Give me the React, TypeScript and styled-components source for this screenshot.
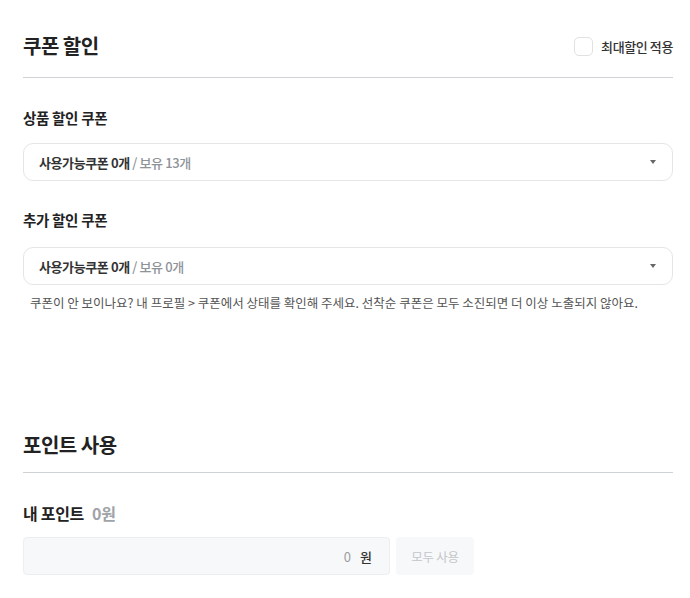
import React from "react";
import styled, { createGlobalStyle } from "styled-components";

const GlobalStyle = createGlobalStyle`
  html, body { margin: 0; padding: 0; background: #fff; }
  body {
    font-family: "Noto Sans CJK KR", "Noto Sans", sans-serif;
    color: #222;
    -webkit-font-smoothing: antialiased;
  }
`;

const Page = styled.div`
  width: 650px;
  padding: 0 17px 0 23px;
`;

const Section = styled.section<{ $top: number }>`
  padding-top: ${(p) => p.$top}px;
`;

const SectionHeader = styled.div<{ $gap: number }>`
  display: flex;
  align-items: center;
  justify-content: space-between;
  padding-bottom: ${(p) => p.$gap}px;
  border-bottom: 1px solid #cfd2d4;
`;

const Title = styled.h2`
  margin: 0;
  font-size: 20px;
  line-height: 32px;
  font-weight: 700;
  color: #222;
  letter-spacing: -0.5px;
`;

const CheckLabel = styled.label`
  display: flex;
  align-items: center;
  gap: 8px;
  font-size: 13px;
  font-weight: 500;
  color: #333;
  letter-spacing: -0.4px;
  cursor: pointer;
`;

const CheckBox = styled.span`
  width: 17px;
  height: 17px;
  border: 1px solid #dfe1e3;
  border-radius: 5px;
  background: #fff;
`;

const Label = styled.h3<{ $top: number }>`
  margin: ${(p) => p.$top}px 0 0;
  font-size: 14.5px;
  line-height: 20px;
  font-weight: 700;
  color: #222;
  letter-spacing: -0.3px;
`;

const Select = styled.div<{ $top: number }>`
  margin-top: ${(p) => p.$top}px;
  height: 36px;
  border: 1px solid #e3e5e7;
  border-radius: 10px;
  display: flex;
  align-items: center;
  justify-content: space-between;
  padding: 0 16px 0 15px;
`;

const SelectText = styled.span`
  font-size: 13px;
  font-weight: 700;
  color: #333;
  letter-spacing: -0.4px;
`;

const Muted = styled.span`
  font-weight: 500;
  color: #8e9399;
`;

const Caret = styled.span`
  width: 0;
  height: 0;
  border-left: 3.5px solid transparent;
  border-right: 3.5px solid transparent;
  border-top: 4px solid #666;
`;

const Note = styled.p`
  margin: 9px 0 0;
  padding-left: 7px;
  font-size: 12.5px;
  line-height: 18px;
  color: #555;
  letter-spacing: 0;
`;

const PointLabel = styled.div`
  margin-top: 29px;
  font-size: 16px;
  line-height: 22px;
  font-weight: 700;
  color: #222;
  display: flex;
  gap: 8px;
  letter-spacing: -0.3px;
`;

const PointValue = styled.span`
  color: #a0a4a8;
`;

const PointRow = styled.div`
  margin-top: 13px;
  display: flex;
  gap: 6px;
`;

const PointInput = styled.div`
  width: 367px;
  height: 38px;
  box-sizing: border-box;
  background: #f7f8f9;
  border: 1px solid #eceef0;
  border-radius: 4px;
  display: flex;
  align-items: center;
  justify-content: flex-end;
  gap: 9px;
  padding-right: 17px;
  font-size: 13px;
`;

const Zero = styled.span`
  color: #9a9ea3;
`;

const Won = styled.span`
  color: #333;
  font-weight: 500;
`;

const AllButton = styled.button`
  width: 78px;
  height: 38px;
  border: none;
  border-radius: 4px;
  background: #f7f8f9;
  color: #c4c7ca;
  font-family: inherit;
  font-size: 12.5px;
  letter-spacing: -0.3px;
`;

export default function App() {
  return (
    <>
      <GlobalStyle />
      <Page>
        <Section $top={30}>
          <SectionHeader $gap={15}>
            <Title>쿠폰 할인</Title>
            <CheckLabel>
              <CheckBox />
              최대할인 적용
            </CheckLabel>
          </SectionHeader>
          <Label $top={30}>상품 할인 쿠폰</Label>
          <Select $top={15}>
            <SelectText>
              사용가능쿠폰 0개 <Muted>/ 보유 13개</Muted>
            </SelectText>
            <Caret />
          </Select>
          <Label $top={29}>추가 할인 쿠폰</Label>
          <Select $top={17}>
            <SelectText>
              사용가능쿠폰 0개 <Muted>/ 보유 0개</Muted>
            </SelectText>
            <Caret />
          </Select>
          <Note>
            쿠폰이 안 보이나요? 내 프로필 &gt; 쿠폰에서 상태를 확인해 주세요. 선착순 쿠폰은 모두 소진되면 더 이상 노출되지 않아요.
          </Note>
        </Section>
        <Section $top={117}>
          <SectionHeader $gap={11}>
            <Title>포인트 사용</Title>
          </SectionHeader>
          <PointLabel>
            내 포인트 <PointValue>0원</PointValue>
          </PointLabel>
          <PointRow>
            <PointInput>
              <Zero>0</Zero>
              <Won>원</Won>
            </PointInput>
            <AllButton>모두 사용</AllButton>
          </PointRow>
        </Section>
      </Page>
    </>
  );
}
